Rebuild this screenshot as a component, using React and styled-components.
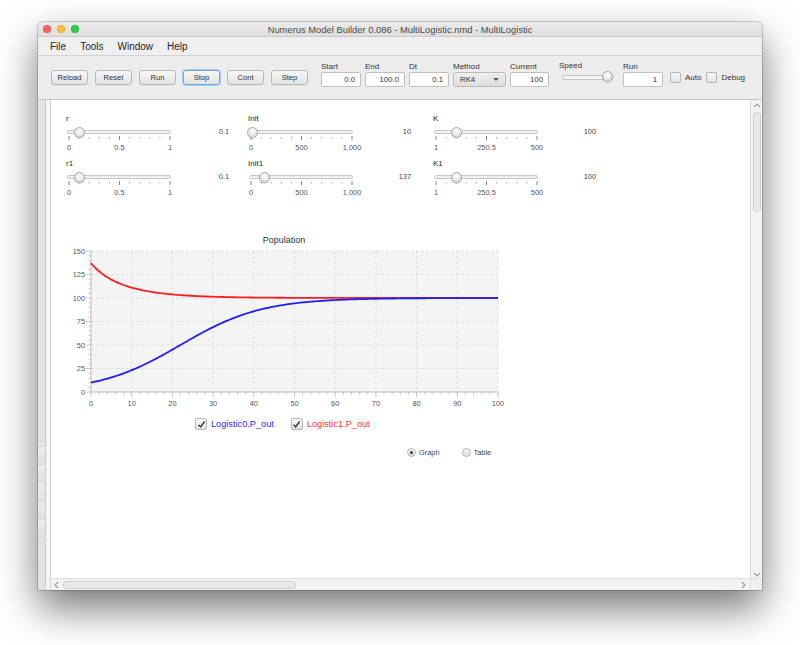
import React from "react";
import styled, { createGlobalStyle } from "styled-components";

const GlobalStyle = createGlobalStyle`
  html, body {
    margin: 0;
    background: #ffffff;
    font-family: "Liberation Sans", Arial, sans-serif;
  }
`;

const Page = styled.div`
  width: 800px;
  height: 645px;
  box-sizing: border-box;
  padding: 22px 0 0 38px;
  overflow: hidden;
`;

const Window = styled.div`
  width: 724px;
  height: 568px;
  display: flex;
  flex-direction: column;
  border-radius: 5px 5px 0 0;
  overflow: hidden;
  background: #ececec;
  box-shadow: 0 18px 40px rgba(0, 0, 0, 0.55), 0 0 0 1px rgba(0, 0, 0, 0.18);
`;

const TitleBar = styled.div`
  height: 14px;
  display: grid;
  grid-template-columns: 1fr auto 1fr;
  align-items: center;
  background: linear-gradient(#ebebeb, #dedede);
  border-bottom: 1px solid #cbcbcb;
`;

const Lights = styled.div`
  display: flex;
  gap: 6px;
  padding-left: 5px;
`;

const Light = styled.span`
  width: 8px;
  height: 8px;
  border-radius: 50%;
  background: ${(p) => p.color};
  box-shadow: inset 0 0 0 0.5px rgba(0, 0, 0, 0.15);
`;

const Title = styled.div`
  font-size: 9.4px;
  color: #4a4a4a;
  white-space: nowrap;
`;

const MenuBar = styled.div`
  height: 18px;
  display: flex;
  align-items: center;
  gap: 14px;
  padding-left: 12px;
  background: #efefef;
  border-bottom: 1px solid #d3d3d3;
  font-size: 10px;
  color: #1e1e1e;
`;

const Toolbar = styled.div`
  height: 44px;
  box-sizing: border-box;
  display: flex;
  align-items: flex-end;
  padding: 0 0 12px 13px;
  background: #ececec;
  border-bottom: 1px solid #c8c8c8;
`;

const ButtonGroup = styled.div`
  display: flex;
  gap: 7px;
  margin-bottom: 2px;
  margin-right: 13px;
`;

const ToolButton = styled.div`
  width: 37px;
  height: 15px;
  box-sizing: border-box;
  display: flex;
  align-items: center;
  justify-content: center;
  font-size: 7.6px;
  color: #333;
  border-radius: 3px;
  background: linear-gradient(#f7f7f7, #e2e2e2);
  border: 1px solid ${(p) => (p.focused ? "#6aa5de" : "#b9b9b9")};
  box-shadow: ${(p) =>
    p.focused ? "0 0 0 1px #a9cdf0" : "0 0.5px 0 rgba(0,0,0,0.08)"};
`;

const FieldGroup = styled.div`
  display: flex;
  flex-direction: column;
  margin-right: ${(p) => p.gap ?? 4}px;
`;

const FieldLabel = styled.div`
  font-size: 8px;
  line-height: 8px;
  color: #333;
  margin-bottom: 1px;
`;

const Field = styled.div`
  width: ${(p) => p.w}px;
  height: 15px;
  box-sizing: border-box;
  border: 1px solid #c0c0c0;
  border-radius: 2px;
  background: #fff;
  font-size: 7.8px;
  color: #333;
  display: flex;
  align-items: center;
  justify-content: flex-end;
  padding-right: 5px;
`;

const Combo = styled.div`
  width: 53px;
  height: 15px;
  box-sizing: border-box;
  border: 1px solid #bababa;
  border-radius: 3px;
  background: linear-gradient(#f0f0f0, #dddddd);
  font-size: 7.8px;
  color: #333;
  display: flex;
  align-items: center;
  justify-content: space-between;
  padding: 0 6px 0 6px;
`;

const ComboArrow = styled.span`
  width: 0;
  height: 0;
  border-left: 3px solid transparent;
  border-right: 3px solid transparent;
  border-top: 3px solid #555;
`;

const SpeedGroup = styled.div`
  display: flex;
  flex-direction: column;
  margin: 0 10px 0 10px;
  align-self: stretch;
  justify-content: flex-end;
`;

const SpeedTrackBox = styled.div`
  position: relative;
  width: 54px;
  height: 11px;
  margin-bottom: 5px;
`;

const MiniTrack = styled.div`
  position: absolute;
  left: 3px;
  right: 0;
  top: 4px;
  height: 3px;
  border-radius: 2px;
  background: #f4f4f4;
  border: 1px solid #c4c4c4;
`;

const Thumb = styled.div`
  position: absolute;
  top: ${(p) => p.top ?? 0}px;
  width: 11px;
  height: 11px;
  box-sizing: border-box;
  border-radius: 50%;
  border: 1px solid #a9a9a9;
  background: radial-gradient(circle at 50% 35%, #ffffff, #dcdcdc 80%);
  box-shadow: 0 0.5px 1px rgba(0, 0, 0, 0.2);
`;

const CheckItem = styled.label`
  display: flex;
  align-items: center;
  gap: 4px;
  margin: 0 5px 4px 0;
  font-size: 8px;
  color: #333;
`;

const Box = styled.span`
  width: ${(p) => p.s ?? 11}px;
  height: ${(p) => p.s ?? 11}px;
  box-sizing: border-box;
  border: 1px solid #b5b5b5;
  border-radius: 2px;
  background: linear-gradient(#f6f6f6, #e3e3e3);
  display: flex;
  align-items: center;
  justify-content: center;
`;

const Body = styled.div`
  flex: 1;
  min-height: 0;
  display: flex;
`;

const LeftStrip = styled.div`
  width: 13px;
  display: flex;
`;

const StripOuter = styled.div`
  width: 7px;
  background: #e2e2e2;
  border-right: 1px solid #cdcdcd;
  display: flex;
  flex-direction: column;
`;

const StripSpacer = styled.div`
  height: ${(p) => p.h}px;
  border-bottom: 1px solid #cfcfcf;
`;

const StripRow = styled.div`
  height: ${(p) => p.h}px;
  border-bottom: 1px solid #dadada;
  background: linear-gradient(#ececec, #e0e0e0);
`;

const StripInner = styled.div`
  width: 4px;
  background: #f4f4f4;
  border-right: 1px solid #d2d2d2;
`;

const Main = styled.div`
  flex: 1;
  display: flex;
  flex-direction: column;
  min-width: 0;
`;

const Upper = styled.div`
  flex: 1;
  min-height: 0;
  display: flex;
`;

const Content = styled.div`
  flex: 1;
  background: #fff;
  padding: 14px 0 0 15px;
  overflow: hidden;
`;

const SliderGrid = styled.div`
  display: grid;
  grid-template-columns: 182px 185px 185px;
  row-gap: 6px;
`;

const SliderCell = styled.div`
  display: flex;
  flex-direction: column;
`;

const SliderLabel = styled.div`
  font-size: 8px;
  line-height: 10px;
  color: #222;
  margin-bottom: 1px;
`;

const SliderRow = styled.div`
  display: flex;
`;

const SliderBox = styled.div`
  position: relative;
  width: 105px;
  height: 28px;
`;

const Track = styled.div`
  position: absolute;
  left: 1px;
  right: 0;
  top: 5px;
  height: 4px;
  box-sizing: border-box;
  border-radius: 3px;
  border: 1px solid #c6c6c6;
  background: linear-gradient(#e9e9e9, #f8f8f8);
`;

const TickSvg = styled.svg`
  position: absolute;
  left: 0;
  top: 0;
  overflow: visible;
`;

const SliderValue = styled.div`
  width: 58px;
  text-align: right;
  font-size: 7.4px;
  line-height: 10px;
  margin-top: 2px;
  color: #444;
`;

const ChartSection = styled.div`
  margin-top: 33px;
  display: flex;
  flex-direction: column;
`;

const Legend = styled.div`
  display: flex;
  gap: 17px;
  padding-left: 129px;
  margin-top: 7px;
`;

const LegendItem = styled.div`
  display: flex;
  align-items: center;
  gap: 4px;
  font-size: 9.2px;
  color: ${(p) => p.color};
`;

const RadioRow = styled.div`
  display: flex;
  gap: 22px;
  padding-left: 341px;
  margin-top: 18px;
`;

const RadioItem = styled.div`
  display: flex;
  align-items: center;
  gap: 3px;
  font-size: 7.4px;
  color: #444;
`;

const Radio = styled.span`
  width: 9px;
  height: 9px;
  box-sizing: border-box;
  border-radius: 50%;
  border: 1px solid #b3b3b3;
  background: linear-gradient(#f6f6f6, #dedede);
  display: flex;
  align-items: center;
  justify-content: center;
  &::after {
    content: "";
    width: 3px;
    height: 3px;
    border-radius: 50%;
    background: ${(p) => (p.on ? "#333" : "transparent")};
  }
`;

const VScroll = styled.div`
  width: 11px;
  background: #f3f3f3;
  border-left: 1px solid #dedede;
  display: flex;
  flex-direction: column;
  align-items: center;
`;

const VThumb = styled.div`
  width: 8px;
  height: 100px;
  box-sizing: border-box;
  margin-top: 3px;
  border-radius: 3px;
  border: 1px solid #d0d0d0;
  background: #e8e8e8;
`;

const Grow = styled.div`
  flex: 1;
`;

const HScroll = styled.div`
  height: 11px;
  display: flex;
  align-items: center;
  background: #f3f3f3;
  border-top: 1px solid #dedede;
`;

const HThumb = styled.div`
  width: 233px;
  height: 8px;
  box-sizing: border-box;
  margin-left: 3px;
  border-radius: 3px;
  border: 1px solid #d0d0d0;
  background: #e8e8e8;
`;

const Corner = styled.div`
  width: 11px;
  height: 11px;
  margin-left: 3px;
  border-left: 1px solid #dedede;
  background: #f0f0f0;
`;

const Arrow = ({ dir }) => {
  const paths = {
    up: "M1 5 L4 2 L7 5",
    down: "M1 2 L4 5 L7 2",
    left: "M5 1 L2 4 L5 7",
    right: "M2 1 L5 4 L2 7",
  };
  const vert = dir === "up" || dir === "down";
  return (
    <svg
      width={vert ? 8 : 7}
      height={vert ? 7 : 8}
      viewBox={vert ? "0 0 8 7" : "0 0 7 8"}
      style={{ margin: vert ? "2px 0 0" : "0 0 0 2px", flex: "none" }}
    >
      <path d={paths[dir]} fill="none" stroke="#9a9a9a" strokeWidth="1.1" />
    </svg>
  );
};

const Check = () => (
  <svg width="9" height="9" viewBox="0 0 9 9">
    <path d="M1.5 4.8 L3.6 7 L7.6 1.5" fill="none" stroke="#3a3a3a" strokeWidth="1.4" />
  </svg>
);

function Slider({ label, value, min, max, ticks }) {
  const frac = (value - min) / (max - min);
  const x0 = 3;
  const span = 101;
  const marks = Array.from({ length: 11 }, (_, i) => x0 + (span * i) / 10);
  return (
    <SliderCell>
      <SliderLabel>{label}</SliderLabel>
      <SliderRow>
        <SliderBox>
          <Track />
          <TickSvg width="105" height="28">
            {marks.map((x, i) =>
              i % 5 === 0 ? (
                <line key={i} x1={x} x2={x} y1="11" y2="15" stroke="#777" strokeWidth="0.9" />
              ) : (
                <line key={i} x1={x} x2={x} y1="12" y2="13.5" stroke="#999" strokeWidth="0.9" />
              )
            )}
            {ticks.map((t, i) => (
              <text
                key={t}
                x={marks[i * 5]}
                y="24.5"
                fontSize="7.4"
                fill="#555"
                textAnchor="middle"
                fontFamily="Liberation Sans, Arial, sans-serif"
              >
                {t}
              </text>
            ))}
          </TickSvg>
          <Thumb top={1.5} style={{ left: x0 + frac * span - 5.5 }} />
        </SliderBox>
        <SliderValue>{value}</SliderValue>
      </SliderRow>
    </SliderCell>
  );
}

const sliders = [
  { label: "r", value: 0.1, min: 0, max: 1, ticks: ["0", "0.5", "1"] },
  { label: "Init", value: 10, min: 0, max: 1000, ticks: ["0", "500", "1,000"] },
  { label: "K", value: 100, min: 1, max: 500, ticks: ["1", "250.5", "500"] },
  { label: "r1", value: 0.1, min: 0, max: 1, ticks: ["0", "0.5", "1"] },
  { label: "Init1", value: 137, min: 0, max: 1000, ticks: ["0", "500", "1,000"] },
  { label: "K1", value: 100, min: 1, max: 500, ticks: ["1", "250.5", "500"] },
];

// plot area in page coords
const PX0 = 91;
const PX1 = 498;
const PY0 = 393;
const PY1 = 252;
const sx = (t) => PX0 + ((PX1 - PX0) * t) / 100;
const sy = (v) => PY0 - ((PY0 - PY1) * v) / 150;

const logistic = (p0) => (t) => 100 / (1 + (100 / p0 - 1) * Math.exp(-0.1 * t));

const curve = (f) =>
  Array.from({ length: 201 }, (_, i) => i / 2)
    .map((t) => `${sx(t).toFixed(2)},${sy(f(t)).toFixed(2)}`)
    .join(" ");

function Chart() {
  const font = "Liberation Sans, Arial, sans-serif";
  return (
    <svg width="450" height="180" viewBox="66 232 450 180">
      <text x="284" y="243.5" fontSize="9" fill="#333" textAnchor="middle" fontFamily={font}>
        Population
      </text>
      <rect x={PX0} y={PY1} width={PX1 - PX0} height={PY0 - PY1} fill="#f4f4f4" />
      {Array.from({ length: 10 }, (_, i) => (
        <line
          key={"gx" + i}
          x1={sx((i + 1) * 10)}
          x2={sx((i + 1) * 10)}
          y1={PY1}
          y2={PY0}
          stroke="#d9d9d9"
          strokeDasharray="3 2"
          strokeWidth="0.8"
        />
      ))}
      {Array.from({ length: 6 }, (_, i) => (
        <line
          key={"gy" + i}
          x1={PX0}
          x2={PX1}
          y1={sy((i + 1) * 25)}
          y2={sy((i + 1) * 25)}
          stroke="#d9d9d9"
          strokeDasharray="3 2"
          strokeWidth="0.8"
        />
      ))}
      <line x1={PX0} x2={PX0} y1={PY1} y2={PY0} stroke="#b5b5b5" strokeWidth="0.9" />
      <line x1={PX0} x2={PX1} y1={PY0} y2={PY0} stroke="#b5b5b5" strokeWidth="0.9" />
      {Array.from({ length: 31 }, (_, i) => (
        <line
          key={"ty" + i}
          x1={i % 5 === 0 ? PX0 - 5 : PX0 - 2.5}
          x2={PX0}
          y1={sy(i * 5)}
          y2={sy(i * 5)}
          stroke="#aaa"
          strokeWidth="0.7"
        />
      ))}
      {Array.from({ length: 51 }, (_, i) => (
        <line
          key={"tx" + i}
          x1={sx(i * 2)}
          x2={sx(i * 2)}
          y1={PY0}
          y2={i % 5 === 0 ? PY0 + 5 : PY0 + 2.5}
          stroke="#aaa"
          strokeWidth="0.7"
        />
      ))}
      {[0, 25, 50, 75, 100, 125, 150].map((v) => (
        <text key={"ly" + v} x="85" y={sy(v) + 2.6} fontSize="7.4" fill="#555" textAnchor="end" fontFamily={font}>
          {v}
        </text>
      ))}
      {Array.from({ length: 11 }, (_, i) => i * 10).map((t) => (
        <text key={"lx" + t} x={sx(t)} y="407" fontSize="7.4" fill="#555" textAnchor="middle" fontFamily={font}>
          {t}
        </text>
      ))}
      <polyline points={curve(logistic(137))} fill="none" stroke="#ff1c1c" strokeWidth="1.8" />
      <polyline points={curve(logistic(10))} fill="none" stroke="#1e1eff" strokeWidth="1.8" />
    </svg>
  );
}

export default function App() {
  return (
    <Page>
      <GlobalStyle />
      <Window>
        <TitleBar>
          <Lights>
            <Light color="#fc605b" />
            <Light color="#fdbc40" />
            <Light color="#34c84a" />
          </Lights>
          <Title>Numerus Model Builder 0.086 - MultiLogistic.nmd - MultiLogistic</Title>
          <div />
        </TitleBar>
        <MenuBar>
          <span>File</span>
          <span>Tools</span>
          <span>Window</span>
          <span>Help</span>
        </MenuBar>
        <Toolbar>
          <ButtonGroup>
            <ToolButton>Reload</ToolButton>
            <ToolButton>Reset</ToolButton>
            <ToolButton>Run</ToolButton>
            <ToolButton focused>Stop</ToolButton>
            <ToolButton>Cont</ToolButton>
            <ToolButton>Step</ToolButton>
          </ButtonGroup>
          <FieldGroup>
            <FieldLabel>Start</FieldLabel>
            <Field w={40}>0.0</Field>
          </FieldGroup>
          <FieldGroup>
            <FieldLabel>End</FieldLabel>
            <Field w={40}>100.0</Field>
          </FieldGroup>
          <FieldGroup>
            <FieldLabel>Dt</FieldLabel>
            <Field w={40}>0.1</Field>
          </FieldGroup>
          <FieldGroup>
            <FieldLabel>Method</FieldLabel>
            <Combo>
              <span>RK4</span>
              <ComboArrow />
            </Combo>
          </FieldGroup>
          <FieldGroup gap={0}>
            <FieldLabel>Current</FieldLabel>
            <Field w={39}>100</Field>
          </FieldGroup>
          <SpeedGroup>
            <FieldLabel>Speed</FieldLabel>
            <SpeedTrackBox>
              <MiniTrack />
              <Thumb style={{ left: 42.5 }} />
            </SpeedTrackBox>
          </SpeedGroup>
          <FieldGroup gap={7}>
            <FieldLabel>Run</FieldLabel>
            <Field w={40}>1</Field>
          </FieldGroup>
          <CheckItem>
            <Box />
            Auto
          </CheckItem>
          <CheckItem>
            <Box />
            Debug
          </CheckItem>
        </Toolbar>
        <Body>
          <LeftStrip>
            <StripOuter>
              <StripSpacer h={341} />
              <StripRow h={4} />
              <StripRow h={17} />
              <StripRow h={17} />
              <StripRow h={18} />
              <StripRow h={17} />
              <StripRow h={16} />
              <Grow />
            </StripOuter>
            <StripInner />
          </LeftStrip>
          <Main>
            <Upper>
              <Content>
                <SliderGrid>
                  {sliders.map((s) => (
                    <Slider key={s.label} {...s} />
                  ))}
                </SliderGrid>
                <ChartSection>
                  <Chart />
                  <Legend>
                    <LegendItem color="#2b2bff">
                      <Box s={12}>
                        <Check />
                      </Box>
                      Logistic0.P_out
                    </LegendItem>
                    <LegendItem color="#ff3030">
                      <Box s={12}>
                        <Check />
                      </Box>
                      Logistic1.P_out
                    </LegendItem>
                  </Legend>
                  <RadioRow>
                    <RadioItem>
                      <Radio on />
                      Graph
                    </RadioItem>
                    <RadioItem>
                      <Radio />
                      Table
                    </RadioItem>
                  </RadioRow>
                </ChartSection>
              </Content>
              <VScroll>
                <Arrow dir="up" />
                <VThumb />
                <Grow />
                <Arrow dir="down" />
              </VScroll>
            </Upper>
            <HScroll>
              <Arrow dir="left" />
              <HThumb />
              <Grow />
              <Arrow dir="right" />
              <Corner />
            </HScroll>
          </Main>
        </Body>
      </Window>
    </Page>
  );
}
